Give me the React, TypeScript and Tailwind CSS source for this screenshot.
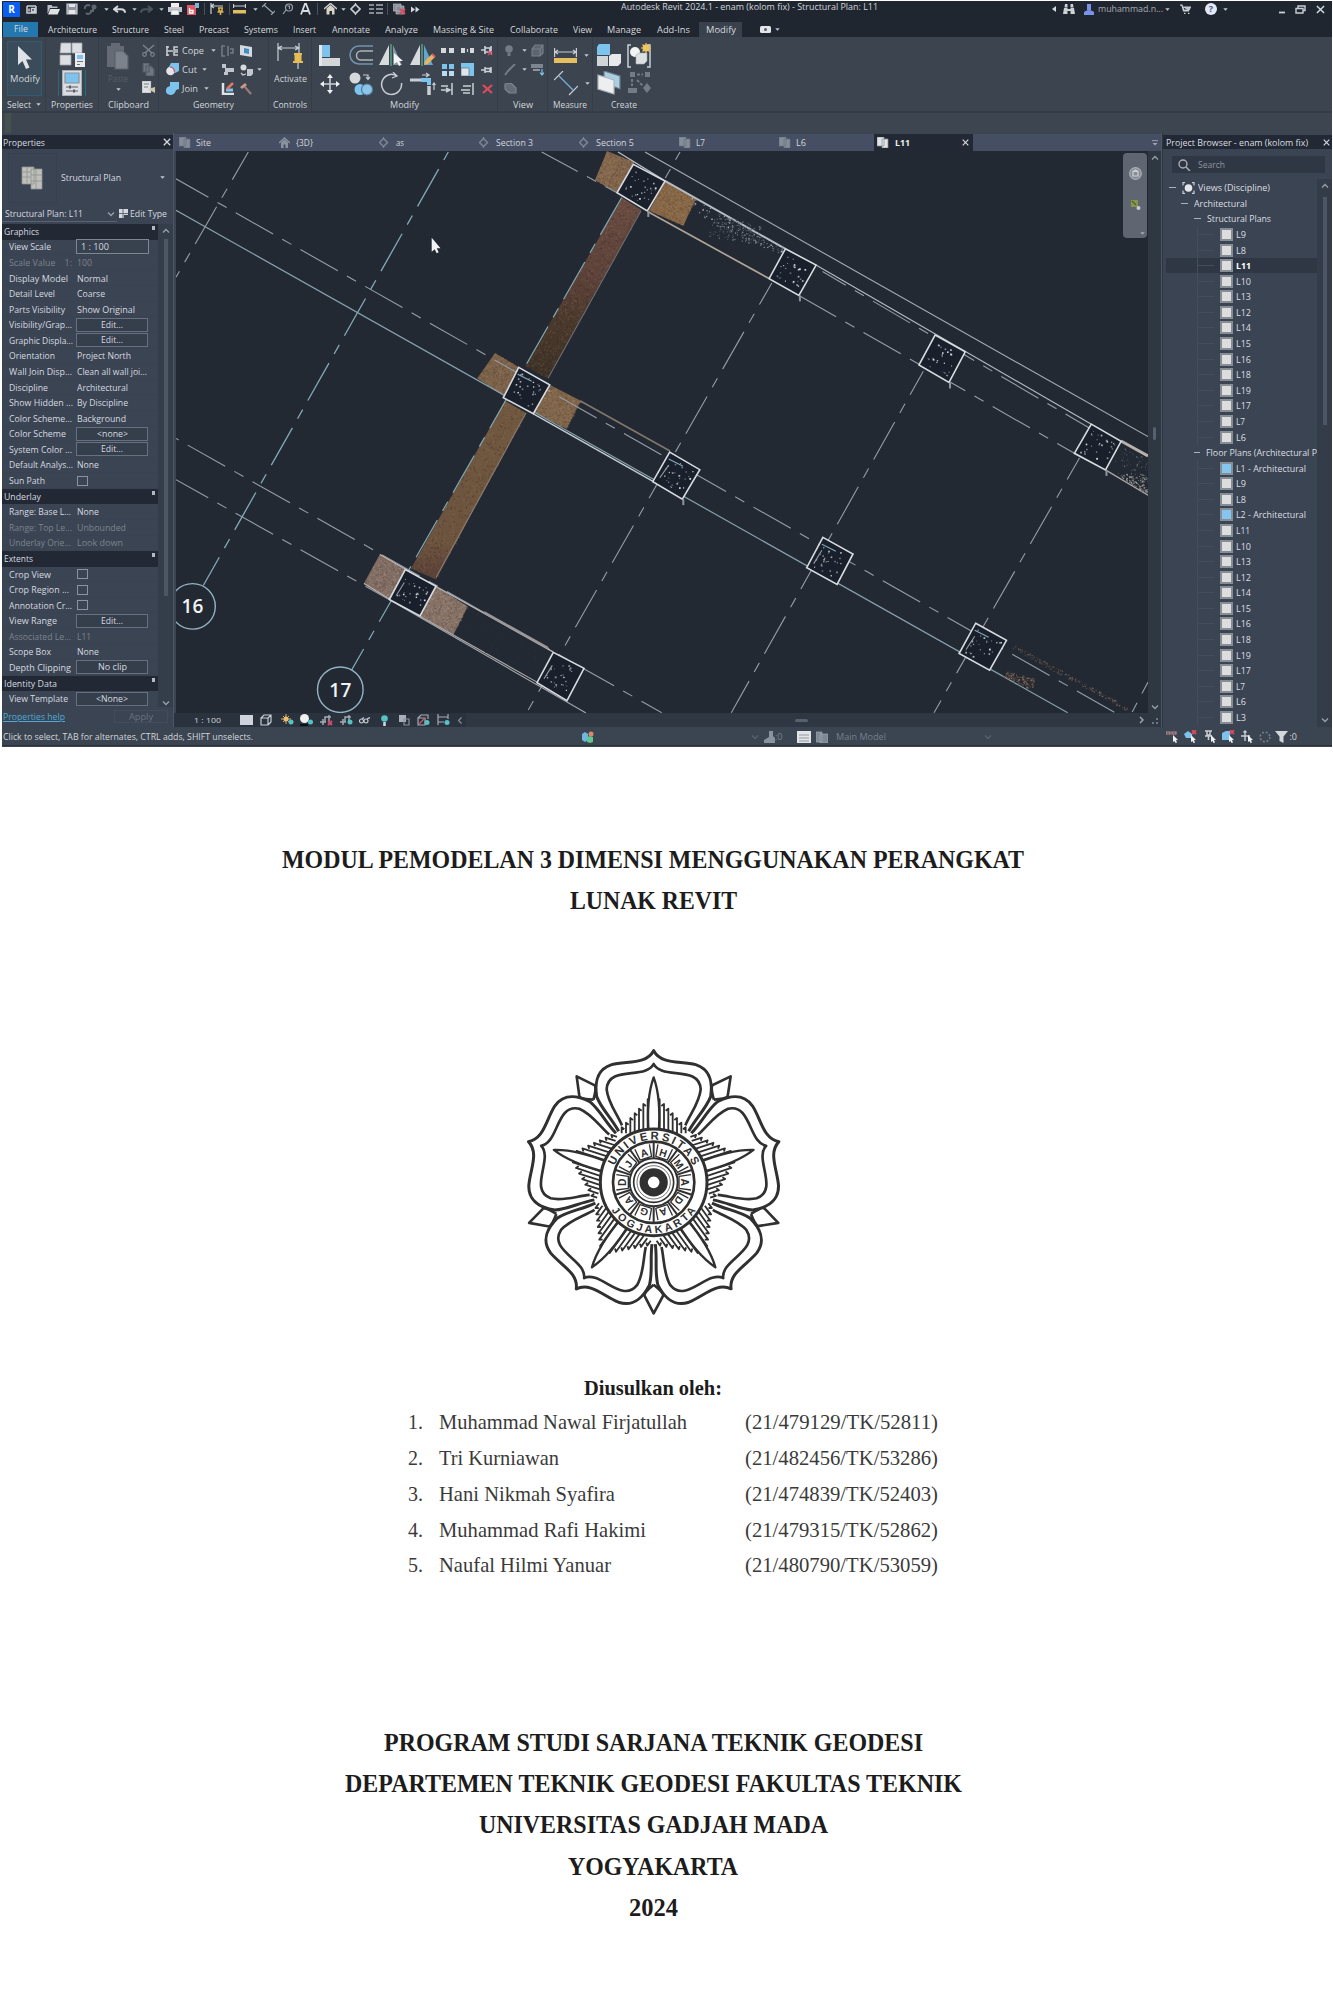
import React, { useLayoutEffect, useRef } from 'react';

type Kids = { children?: React.ReactNode };

/* Single-line label condensed or widened to an exact advance width. */
function Fit({ t, w, c = '' }: { t: string; w: number; c?: string }) {
  const ref = useRef<HTMLSpanElement>(null);
  const box = useRef<HTMLSpanElement>(null);
  useLayoutEffect(() => {
    if (!ref.current || !box.current) return;
    ref.current.style.transform = 'none';
    const n = ref.current.getBoundingClientRect().width;
    ref.current.style.transform = `scaleX(${w / n})`;
    box.current.style.width = `${w}px`;
  }, [t, w]);
  return (
    <span ref={box} className={`inline-block shrink-0 whitespace-nowrap ${c}`}>
      <span ref={ref} className="inline-block origin-left whitespace-nowrap">{t}</span>
    </span>
  );
}

function S({ w, h, c = '', children }: { w: number; h: number; c?: string } & Kids) {
  return (
    <svg width={w} height={h} viewBox={`0 0 ${w} ${h}`} fill="none" stroke="#c9ced4" strokeWidth="1.2" className={`block shrink-0 ${c}`}>
      {children}
    </svg>
  );
}

const Caret = ({ c = '' }: { c?: string }) => (
  <S w={5} h={3} c={c}><path d="M.3.2h4.4L2.5 2.8z" fill="#c3c9d0" stroke="none" /></S>
);
const Close = ({ s = 8 }: { s?: number }) => (
  <svg width={s} height={s} viewBox="0 0 8 8" stroke="#d5dae0" strokeWidth="1.3" className="block shrink-0"><path d="M.8.8l6.4 6.4M7.2.8L.8 7.2" /></svg>
);
const Chev = ({ d = 'down', c = '' }: { d?: string; c?: string }) => (
  <S w={8} h={6} c={c}><path d={d === 'down' ? 'M1 1.5l3 3 3-3' : 'M1 4.5l3-3 3 3'} stroke="#98a0ab" strokeWidth="1.3" /></S>
);
const Bar = () => <span className="h-3 w-px bg-[#4a525d]" />;

/* ---------- title bar ---------- */
function TitleBar() {
  return (
    <div className="flex h-[21px] items-start bg-[#20262f] text-[9px] text-[#d0d5da]">
      <div className="flex h-4 items-center">
        <div className="ml-px flex h-[15px] w-[17px] items-center justify-center bg-[#0b5ff0] text-[10px] font-bold text-white">R</div>
        <div className="ml-[6px] w-[21px]"><S w={11} h={10}><path d="M1 2h9M1 2v7h9V2M3 4.5v3M5.5 4.5h3v3h-3z" strokeWidth="1.5" /></S></div>
        <div className="w-[19px]"><S w={13} h={11}><path d="M.5 10V1h4l1 1.5h5V4H3z" fill="#b9bec4" stroke="none" /><path d="M3.2 5H13l-2.4 5.5H1z" fill="#dfe2e5" stroke="none" /></S></div>
        <div className="w-[18px]"><S w={12} h={12}><path d="M1 1h10v10H1z" fill="#8f959d" stroke="#c9ced4" /><path d="M3 1h6v3H3zM2.5 7h7v4h-7z" fill="#e5e7ea" stroke="none" /></S></div>
        <div className="w-[20px]"><S w={13} h={12}><path d="M1 6a3 3 0 015-3M7 7a3 3 0 01-5 3M6 8h3V5" stroke="#5d6570" strokeWidth="2" /><circle cx="10" cy="4" r="2.5" fill="#5d6570" stroke="none" /></S></div>
        <div className="w-[9px]"><Caret /></div>
        <div className="w-[19px]"><S w={13} h={9}><path d="M5 1L1 4.200l4 3M1.500 4.200h6.500q4 0 4 3.500" strokeWidth="2" stroke="#d5d9de" /></S></div>
        <div className="w-[8px]"><Caret /></div>
        <div className="w-[19px]"><S w={13} h={9}><path d="M8 1l4 3.200-4 3M11.500 4.200H5q-4 0-4 3.500" strokeWidth="2" stroke="#4b535e" /></S></div>
        <div className="w-[9px]"><Caret /></div>
        <div className="w-[19px]"><S w={14} h={12}><path d="M3 0h8v4H3z" fill="#eee" stroke="none" /><path d="M0 4h14v5H0z" fill="#c4c8cd" stroke="none" /><path d="M3 7h8v5H3z" fill="#f3f3f3" stroke="#8d939b" strokeWidth=".6" /></S></div>
        <div className="w-[17px]"><S w={12} h={12}><path d="M0 2h9v10H0z" fill="#e2596a" stroke="none" /><path d="M2.500 5v5h3.500V7.500H2.500" stroke="#fff" strokeWidth="1.300" /><path d="M8 0h4v5H8z" fill="#77b7d8" stroke="none" /></S></div>
        <Bar />
        <div className="ml-[5px] w-[19px]"><S w={14} h={12}><path d="M1 0v11M1 3h12M4 1L1 3l3 2" /><path d="M8 5h5M9 5v3h3V5M7.500 9h6M10.500 9v3" stroke="#d8b253" strokeWidth="1.500" /></S></div>
        <Bar />
        <div className="ml-[3px] w-[20px]"><S w={13} h={10}><path d="M.5 2h12M.5 0v4M12.500 0v4" /><path d="M0 6h13v3.500H0z" fill="#e0bf63" stroke="none" /></S></div>
        <div className="w-[9px]"><Caret /></div>
        <div className="w-[20px]"><S w={13} h={12}><path d="M2 2l9 8M0 4l4-4M9 12l4-4" stroke="#9aa1aa" /></S></div>
        <div className="w-[18px]"><S w={12} h={12}><circle cx="7" cy="4.500" r="3.500" stroke="#9aa1aa" /><path d="M5.500 3h2v3M1 11l3-4" stroke="#9aa1aa" /></S></div>
        <div className="w-[17px]"><S w={11} h={12}><path d="M1 11.500L5 .8h1L10 11.500M2.500 8h6" strokeWidth="1.800" stroke="#d9dde1" /></S></div>
        <Bar />
        <div className="ml-[6px] w-[17px]"><S w={13} h={12}><path d="M0 6l6.500-5.500L13 6" strokeWidth="1.600" /><path d="M2.500 5.500v6h3V8h2.500v3.500h2.500v-6L6.500 2z" fill="#d9d4c8" stroke="none" /></S></div>
        <div className="w-[9px]"><Caret /></div>
        <div className="w-[19px]"><S w={11} h={12}><path d="M5.500 1.500L10 6l-4.500 4.500L1 6z" strokeWidth="1.600" /><path d="M5.500 0v2M5.500 10v2" /></S></div>
        <div className="w-[18px]"><S w={14} h={12}><path d="M0 2h5M7 2h7M0 6h5M7 6h7M0 10h5M7 10h7" stroke="#a9afb7" strokeWidth="1.500" /></S></div>
        <Bar />
        <div className="ml-[5px] w-[18px]"><S w={13} h={12}><path d="M0 1h8v7H0zM3 3h8v8H3z" fill="#858c95" stroke="#b4bac1" strokeWidth=".7" /><path d="M7 6l5 5M12 6l-5 5" stroke="#d64c63" strokeWidth="2" /></S></div>
        <S w={9} h={7}><path d="M0 .5L4 3.500 0 6.500zM4.500 .5l4 3-4 3z" fill="#d5d9de" stroke="none" /></S>
      </div>
      <div className="flex h-[12px] w-[632px] shrink-0 items-center pl-[201px]"><Fit t="Autodesk Revit 2024.1 - enam (kolom fix) - Structural Plan: L11" w={257} c="leading-3" /></div>
      <div className="flex h-4 items-center">
        <S w={4} h={6} c="mr-[7px]"><path d="M4 0v6L0 3z" fill="#d5d9de" stroke="none" /></S>
        <div className="w-[21px]"><S w={12} h={10}><path d="M1 4h3.500v6H0zM7.500 4H11l1 6H7.500zM2 0h2.500v3.500H1.500zM7.500 0H10l.5 3.500h-3zM4.500 5h3v2h-3z" fill="#ccd1d6" stroke="none" /></S></div>
        <div className="w-[14px]"><S w={10} h={11}><path d="M3 0h4v6H3zM0 8q5-4 10 0v3H0z" fill="#7a93e8" stroke="none" /></S></div>
        <Fit t="muhammad.n..." w={65} c="text-[#a6acb4]" />
        <Caret c="ml-[2px]" />
        <S w={11} h={10} c="ml-[10px]"><path d="M0 1h2l1.500 6H9M3 3h7.500L9 6H3.500z" fill="#bfc4ca" /><path d="M4 9.300h1.500M8 9.300h1.500" /></S>
        <div className="ml-[8px]"><Bar /></div>
        <div className="ml-[6px] flex h-[12px] w-[12px] items-center justify-center rounded-full bg-[#e3e8f5] text-[9px] font-bold text-[#3e5487]">?</div>
        <Caret c="ml-[6px]" />
        <S w={6} h={9} c="ml-[51px]"><path d="M0 7.500h6" strokeWidth="1.800" /></S>
        <S w={11} h={9} c="ml-[10px]"><path d="M3 3V1h7v4.500H8M1 3.500h7V8H1z" strokeWidth="1.400" /></S>
        <div className="ml-[10px]"><Close s={9} /></div>
      </div>
    </div>
  );
}

/* ---------- ribbon tabs ---------- */
const TABS: [string, string, number][] = [
  ['w-[64px]', 'Architecture', 49], ['w-[52px]', 'Structure', 37], ['w-[35px]', 'Steel', 20], ['w-[45px]', 'Precast', 30],
  ['w-[49px]', 'Systems', 34], ['w-[39px]', 'Insert', 23], ['w-[53px]', 'Annotate', 38], ['w-[48px]', 'Analyze', 33],
  ['w-[77px]', 'Massing & Site', 61], ['w-[63px]', 'Collaborate', 48], ['w-[34px]', 'View', 19], ['w-[50px]', 'Manage', 34], ['w-[42px]', 'Add-Ins', 33],
];
function RibbonTabs() {
  return (
    <div className="flex h-[15px] items-center bg-[#20262f] text-[9.5px] text-[#d6dade]">
      <div className="ml-px mr-[10px] flex h-[15px] w-[35px] items-center justify-center bg-[#2478b0]"><Fit t="File" w={14} /></div>
      {TABS.map(([cl, t, w]) => <div key={t} className={`shrink-0 leading-[15px] ${cl}`}><Fit t={t} w={w} /></div>)}
      <div className="flex h-[15px] w-[43px] items-center justify-center bg-[#38414c] leading-[15px]"><Fit t="Modify" w={30} /></div>
      <S w={11} h={7} c="ml-[18px]"><rect width="11" height="7" rx="1.500" fill="#e3e6e9" stroke="none" /><circle cx="5.500" cy="3.500" r="1.500" fill="#555d68" stroke="none" /></S>
      <Caret c="ml-[4px]" />
    </div>
  );
}

/* ---------- ribbon ---------- */
function Panel({ c, t, w, caret, children }: { c: string; t: string; w: number; caret?: boolean } & Kids) {
  return (
    <div className={`flex shrink-0 flex-col border-r border-[#343d48] pt-1 ${c}`}>
      <div className="flex h-[58px]">{children}</div>
      <div className="flex h-[14px] items-center justify-center gap-[5px]"><Fit t={t} w={w} />{caret && <Caret />}</div>
    </div>
  );
}
const Cell = ({ c = '', children }: { c?: string } & Kids) => <div className={`flex items-center justify-center ${c}`}>{children}</div>;
const BL = '#7cc4ee';

function Ribbon() {
  return (
    <div className="flex h-[76px] border-b-2 border-[#343c4a] bg-[#3b444f] text-[9.5px] leading-[13px] text-[#d3d7dc]">
      <Panel c="w-[44px]" t="Select" w={24} caret>
        <div className="ml-[5px] flex h-[55px] w-[35px] flex-col items-center border border-[#2f5b73] bg-[#3a4b59]">
          <S w={16} h={25} c="mt-[3px]"><path d="M1 1v19l4.500-4 3.500 8 3.500-1.500-3.500-8h6z" fill="#dfe2e6" stroke="none" /></S>
          <Fit t="Modify" w={30} c="mt-[2px]" />
        </div>
      </Panel>
      <Panel c="w-[53px]" t="Properties" w={42}>
        <div className="flex w-full flex-col items-center">
          <S w={27} h={26} c="mt-px"><path d="M2 1h10v10H1zM13 1h10v10H13zM1 13h11v10H1z" fill="#dcdee1" stroke="#9ca2aa" strokeWidth=".8" /><path d="M16 11h10v14H16z" fill="#e8eaec" stroke="none" /><path d="M18 13h6v4h-6z" fill={BL} stroke="none" /><path d="M18 19.500h6M18 22.500h3" stroke="#6d747d" /></S>
          <div className="mt-[2px] flex w-[28px] justify-center border-x border-[#2b6a83]"><S w={20} h={26}><path d="M.5.5h19v25H.500z" fill="#dadde1" stroke="#a7adb4" /><path d="M3 3h14v10H3z" fill={BL} stroke="#8a9099" /><path d="M4 17h12M4 21h12" stroke="#575e68" /><path d="M8 15.500v3M12 19.500v3" stroke="#575e68" strokeWidth="2" /></S></div>
        </div>
      </Panel>
      <Panel c="w-[60px]" t="Clipboard" w={41}>
        <div className="mr-[5px] flex w-[38px] flex-col items-center text-[#565f6a]">
          <S w={22} h={27} c="mt-[2px]"><path d="M0 3h17v21H0zM4 0h9v5H4z" fill="#646b75" stroke="none" /><path d="M8 8h8l5 5v13H8z" fill="#7b828b" stroke="#5b626c" /></S>
          <Fit t="Paste" w={20} c="mt-[2px]" /><Caret c="mt-[3px]" />
        </div>
        <div className="flex flex-col justify-around">
          <S w={13} h={13}><path d="M1 1l9 8M12 1L3 9" stroke="#7b838d" strokeWidth="1.500" /><circle cx="2.500" cy="10.500" r="1.800" stroke="#7b838d" /><circle cx="10.500" cy="10.500" r="1.800" stroke="#7b838d" /></S>
          <S w={13} h={13}><path d="M1 0h6v9H1zM4 3h5l3 3v7H4z" fill="#6f7680" stroke="#535b66" /></S>
          <S w={14} h={13}><path d="M.5.500h8v11h-8z" fill="#dfe2e5" /><path d="M2 3h5M2 6h4" stroke="#757c86" /><path d="M6 8l7 4V6z" fill="#cfc9a8" stroke="none" /></S>
        </div>
      </Panel>
      <Panel c="w-[110px]" t="Geometry" w={41}>
        <div className="ml-[7px] flex w-[55px] flex-col">
          <div className="flex h-[19px] items-center"><S w={13} h={10}><path d="M1 0v10M0 1h3M0 9h3M1 5h6M12 1H8v3h4M12 9H8V6h4" strokeWidth="1.500" /></S><Fit t="Cope" w={22} c="ml-[3px]" /><Caret c="ml-[7px]" /></div>
          <div className="flex h-[19px] items-center"><S w={13} h={13}><circle cx="4.500" cy="8" r="4.300" fill="#e3e5e8" stroke="none" /><path d="M5 0h8v8l-4 2q0-5-6-6z" fill={BL} stroke="none" /><path d="M4 4q4 0 4.500 5" stroke="#d94c5f" /></S><Fit t="Cut" w={15} c="ml-[3px]" /><Caret c="ml-[5px]" /></div>
          <div className="flex h-[19px] items-center"><S w={13} h={13}><path d="M4 0h9v7l-3 1q-1 5-6 5-5-1-4-5 0-3 4-4z" fill={BL} stroke="none" /></S><Fit t="Join" w={16} c="ml-[3px]" /><Caret c="ml-[6px]" /></div>
        </div>
        <div className="flex w-[19px] flex-col justify-around">
          <S w={13} h={12}><path d="M4 1H1v10h3M7 1v10M9 4h3v4H9" stroke="#727a85" strokeWidth="1.600" /></S>
          <S w={14} h={11}><path d="M1 0h4v4H1zM4 4h9v4H4zM3 8h4v3H3z" fill="#bfc4ca" stroke="none" /></S>
          <S w={14} h={13}><path d="M2 1v11h11" stroke="#e0e3e6" strokeWidth="2.500" /><path d="M5 8h7" stroke={BL} strokeWidth="3" /><path d="M6 7l6-6" stroke="#e07862" strokeWidth="2.500" /></S>
        </div>
        <div className="flex flex-col justify-around">
          <S w={13} h={12}><path d="M0 0l12 2v10L0 10z" fill="#d6dade" stroke="none" /><path d="M4 3l5 1v5L4 8z" fill="#3f8fc4" stroke="none" /></S>
          <div className="flex w-[22px] items-center justify-between"><S w={13} h={12}><circle cx="3.500" cy="3.500" r="3" fill="#d6dade" stroke="none" /><path d="M7 5h6v5l-2 2H7z" fill="#c2c7cd" stroke="none" /><path d="M1 9l2 2 3-1" /></S><Caret /></div>
          <S w={12} h={12}><path d="M4 3l7 8" stroke="#9b7a72" strokeWidth="2.200" /><path d="M0 4l5-4 2 2-5 4z" fill="#c39a8d" stroke="none" /></S>
        </div>
      </Panel>
      <Panel c="w-[43px]" t="Controls" w={34}>
        <div className="flex w-full flex-col items-center">
          <S w={26} h={27} c="mt-[2px]"><path d="M1 0v18M22 0v10M1 5h21M5 3L1 5l4 2M18 3l4 2-4 2" /><path d="M17 11h8M18.500 11v7h5v-7M16 19h10" stroke="#e8bc55" fill="#e8bc55" strokeWidth="2" /><path d="M21 20v6" /></S>
          <Fit t="Activate" w={33} c="mt-[2px]" />
        </div>
      </Panel>
      <Panel c="w-[186px]" t="Modify" w={29}>
        <div className="ml-[2px] grid w-[124px] shrink-0 grid-cols-4 grid-rows-2">
          <Cell><S w={21} h={21}><path d="M0 0h3v21H0z" fill="#e5e7e9" stroke="none" /><path d="M3 0h8v12H3z" fill={BL} stroke="none" /><path d="M3 13h18v8H3z" fill="#d4d7da" stroke="none" /></S></Cell>
          <Cell><S w={25} h={21}><path d="M25 1H11a9 9 0 000 18h14" stroke="#7394ac" strokeWidth="1.500" /><path d="M25 6H13a4 4 0 000 9h12" stroke="#aeb4bc" strokeWidth="1.500" /></S></Cell>
          <Cell><S w={25} h={23}><path d="M10 1v20H0z" fill="#d8dbde" stroke="none" /><path d="M14 1v20h9z" fill="#8298a5" stroke="none" /><path d="M12 0v22" stroke="#62b78d" /><path d="M15 9v11l3-2 2 4 2-1-2-4h4z" fill="#f4f4f4" stroke="none" /></S></Cell>
          <Cell><S w={26} h={23}><path d="M10 1v20H0z" fill="#d8dbde" stroke="none" /><path d="M14 1v20h9z" fill="#66a5cf" stroke="none" /><path d="M12 0v22" stroke="#62b78d" /><path d="M14 21l1-4 7-7 3 3-7 7z" fill="#e6b55f" stroke="none" /><path d="M22 10l3 3" stroke="#d9606b" strokeWidth="2" /></S></Cell>
          <Cell><S w={20} h={20}><path d="M10 2v16M2 10h16" strokeWidth="1.600" /><path d="M10 0l3 4H7zM10 20l3-4H7zM0 10l4-3v6zM20 10l-4-3v6z" fill="#f0f1f2" stroke="none" /></S></Cell>
          <Cell><S w={24} h={24}><circle cx="6" cy="6" r="5.500" fill="#d6d9dc" stroke="none" /><path d="M14 3h5v4M17 5l2 2.500 2-2.500" /><circle cx="11" cy="17.500" r="5.500" fill={BL} stroke="none" /><circle cx="18" cy="17.500" r="5.500" fill="#8cc5e8" stroke="#4c7d9c" /></S></Cell>
          <Cell><S w={24} h={24}><path d="M17 4A10 10 0 1021.500 11" strokeWidth="1.500" /><path d="M13 0l4 4-5 2" /></S></Cell>
          <Cell><S w={26} h={23}><path d="M12 3h6M16 1l3 2-3 2" /><path d="M0 8h11" strokeWidth="3" /><path d="M11 8h8v5" stroke={BL} strokeWidth="4" /><path d="M19 14v9" strokeWidth="3.500" /><path d="M24 18v-7M22.500 13l1.500-2 1.500 2" /></S></Cell>
        </div>
        <div className="grid h-[57px] w-[59px] shrink-0 grid-cols-3 grid-rows-3">
          <Cell><S w={13} h={6}><path d="M0 0h5v5H0zM8 0h5v5H8z" fill="#d6d9dc" stroke="none" /></S></Cell>
          <Cell><S w={13} h={6}><path d="M0 0h4v5H0zM9 0h4v5H9z" fill="#d6d9dc" stroke="none" /><path d="M6.500 1v3" /></S></Cell>
          <Cell><S w={13} h={10}><path d="M0 4h4M4 0v8M4 2h5v4H4M10 0v8" strokeWidth="1.700" /><path d="M7 5l4 4M11 5L7 9" stroke="#d64c63" strokeWidth="1.500" /></S></Cell>
          <Cell><S w={12} h={12}><path d="M0 0h5v5H0zM7 0h5v5H7z" fill={BL} stroke="none" /><path d="M0 7h5v5H0zM7 7h5v5H7z" fill="#b9dcf0" stroke="none" /></S></Cell>
          <Cell><S w={13} h={13}><path d="M0 0h13v13H0z" fill={BL} stroke="none" /><path d="M0 5h8v8H0z" fill="#e2e5e8" stroke="#5a7f96" strokeWidth=".8" /></S></Cell>
          <Cell><S w={12} h={8}><path d="M0 4h4M4 1v6M4 2.500h5v3H4M10 1v6" strokeWidth="1.600" /></S></Cell>
          <Cell><S w={13} h={12}><path d="M0 3h7M0 7h9M11 0v12M5 5l4 2-4 2" strokeWidth="1.500" /></S></Cell>
          <Cell><S w={13} h={12}><path d="M2 3h8M0 7h9M2 10h7M12 0v12" strokeWidth="1.500" /></S></Cell>
          <Cell><S w={11} h={10}><path d="M1 1l9 8M10 1L1 9" stroke="#dd4b5e" strokeWidth="2.200" /></S></Cell>
        </div>
      </Panel>
      <Panel c="w-[50px]" t="View" w={20}>
        <div className="ml-[6px] flex w-[27px] flex-col justify-around">
          <div className="flex items-center gap-[8px]"><S w={10} h={12}><circle cx="5" cy="4" r="3.800" fill="#737b85" stroke="none" /><path d="M3.500 8h3v3h-3z" fill="#737b85" stroke="none" /></S><Caret /></div>
          <div className="flex items-center gap-[6px]"><S w={12} h={12}><path d="M1 11l3-4L11 0" stroke="#737b85" strokeWidth="2" /></S><Caret /></div>
          <S w={13} h={11}><path d="M1 1l6-1 5 5v5H5L1 6z" fill="#646c77" stroke="#7d858f" /></S>
        </div>
        <div className="flex flex-col">
          <Cell c="h-[19px]"><S w={13} h={13}><path d="M1 5l3-4h8v8l-3 3H1zM1 5h8v7M9 5l3-4" fill="#5c646f" stroke="#767e88" /></S></Cell>
          <Cell c="h-[19px]"><S w={13} h={13}><path d="M0 1h12v4H0z" fill="#7d858f" stroke="none" /><path d="M2 7h7" /><path d="M11 6v6M9 9.500l2 2.500 2-2.500" stroke={BL} /></S></Cell>
        </div>
      </Panel>
      <Panel c="w-[45px]" t="Measure" w={34}>
        <div className="ml-[6px] flex flex-col">
          <div className="flex h-[28px] items-center gap-[7px]"><S w={23} h={15}><path d="M.600 0v9M22.400 0v9M1 4h21M4 2L1 4l3 2M19 2l3 2-3 2" /><path d="M0 10h23v5H0z" fill="#e8bf60" stroke="none" /></S><Caret /></div>
          <div className="flex h-[28px] items-center gap-[7px]"><S w={24} h={25}><path d="M5 5l14 14" stroke="#71b3dc" /><path d="M0 9l9-9M15 24l9-9" /></S><Caret /></div>
        </div>
      </Panel>
      <Panel c="w-[63px] border-transparent" t="Create" w={26}>
        <div className="ml-px grid w-[60px] grid-cols-2 grid-rows-2">
          <Cell><S w={24} h={24}><path d="M2 1h11v11H0V4z" fill={BL} stroke="none" /><path d="M0 13h11v10H0z" fill="#d2d5d8" stroke="none" /><path d="M12 13l3-2h9v9l-3 3h-9z" fill="#e6e8ea" stroke="none" /></S></Cell>
          <Cell><S w={25} h={25}><path d="M4 2H1v22h3M20 2h3v22h-3" strokeWidth="1.500" /><circle cx="8" cy="9" r="5" fill="#f2f3f4" stroke="none" /><path d="M9 12l3-2h8v8l-3 3H9z" fill="#dde0e3" stroke="#a7adb4" strokeWidth=".6" /><circle cx="19" cy="5" r="3.500" fill="#f0c55e" stroke="none" /><path d="M19 0v10M14 5h10M15.500 1.500l7 7M22.500 1.500l-7 7" stroke="#f0c55e" /></S></Cell>
          <Cell><S w={25} h={24}><path d="M7 0l16 5v13L7 12z" fill="#a9cfe4" stroke="#6f7881" /><path d="M1 4l16 5v14L1 18z" fill="#eceef0" stroke="#b0b5bb" /></S></Cell>
          <Cell><S w={25} h={24}><path d="M3 1h5v5H3zM18 1h5v5h-5zM1 17h9v5H1z" fill="#747b85" stroke="none" /><path d="M10 3.500h6M5 8v7M10 9l6 6" stroke="#747b85" strokeWidth="2" strokeDasharray="3 1.500" /><path d="M20 12l4 5-4 5-4-5z" fill="#747b85" stroke="none" /></S></Cell>
        </div>
      </Panel>
    </div>
  );
}

/* ---------- properties palette ---------- */
type Kind = 'head' | 'field' | 'dim' | 'text' | 'btn' | 'check';
const PROPS: [Kind, string, number, string, number][] = [
  ['head', 'Graphics', 35, '', 0],
  ['field', 'View Scale', 42, '1 : 100', 28],
  ['dim', 'Scale Value\u00a0\u00a0\u00a0\u00a01:', 63, '100', 15],
  ['text', 'Display Model', 59, 'Normal', 31],
  ['text', 'Detail Level', 46, 'Coarse', 28],
  ['text', 'Parts Visibility', 56, 'Show Original', 58],
  ['btn', 'Visibility/Grap...', 63, 'Edit...', 22],
  ['btn', 'Graphic Displa...', 64, 'Edit...', 22],
  ['text', 'Orientation', 46, 'Project North', 54],
  ['text', 'Wall Join Disp...', 63, 'Clean all wall joi...', 70],
  ['text', 'Discipline', 39, 'Architectural', 51],
  ['text', 'Show Hidden ...', 64, 'By Discipline', 51],
  ['text', 'Color Scheme...', 63, 'Background', 49],
  ['btn', 'Color Scheme', 57, '<none>', 31],
  ['btn', 'System Color ...', 63, 'Edit...', 22],
  ['text', 'Default Analys...', 64, 'None', 22],
  ['check', 'Sun Path', 36, '', 0],
  ['head', 'Underlay', 37, '', 0],
  ['text', 'Range: Base L...', 62, 'None', 22],
  ['dim', 'Range: Top Le...', 63, 'Unbounded', 49],
  ['dim', 'Underlay Orie...', 62, 'Look down', 46],
  ['head', 'Extents', 29, '', 0],
  ['check', 'Crop View', 42, '', 0],
  ['check', 'Crop Region ...', 60, '', 0],
  ['check', 'Annotation Cr...', 63, '', 0],
  ['btn', 'View Range', 48, 'Edit...', 22],
  ['dim', 'Associated Le...', 62, 'L11', 14],
  ['text', 'Scope Box', 42, 'None', 22],
  ['btn', 'Depth Clipping', 62, 'No clip', 29],
  ['head', 'Identity Data', 53, '', 0],
  ['btn', 'View Template', 59, '<None>', 32],
];
function PropRow({ r }: { r: (typeof PROPS)[number] }) {
  const [k, a, aw, b, bw] = r;
  if (k === 'head')
    return (
      <div className="flex h-[15.580px] items-center justify-between bg-[#222934] pl-[2px] pr-[3px]">
        <Fit t={a} w={aw} /><span className="mb-[7px] h-[4px] w-[3px] bg-[#b4bac2]" />
      </div>
    );
  return (
    <div className={`flex h-[15.580px] items-center border-b border-[#394251] pl-[7px] ${k === 'dim' ? 'text-[#7b838e]' : ''}`}>
      <div className="w-[67px] shrink-0"><Fit t={a} w={aw} /></div>
      {k === 'btn' && <div className="flex h-[14px] w-[72px] items-center justify-center border border-[#667080] bg-[#353e4b] leading-3"><Fit t={b} w={bw} /></div>}
      {k === 'field' && <div className="flex h-[15px] w-[73px] items-center border border-[#7d8693] bg-[#38414e] pl-1 leading-3"><Fit t={b} w={bw} /></div>}
      {k === 'check' && <div className="ml-px h-[10px] w-[11px] border border-[#8a93a0]" />}
      {(k === 'text' || k === 'dim') && <div className="ml-px"><Fit t={b} w={bw} /></div>}
    </div>
  );
}
function Properties() {
  return (
    <div className="flex w-[172px] shrink-0 flex-col border-r border-[#4c5665] bg-[#3b4452] text-[9.500px] leading-[13px] text-[#d6dae0]">
      <div className="mt-[2px] flex h-[14px] items-center justify-between bg-[#222934] pl-px pr-[2px] text-[9px]"><Fit t="Properties" w={42} /><Close s={8} /></div>
      <div className="flex h-[57px] items-center">
        <div className="ml-[6px] flex h-[50px] w-[49px] items-center justify-center border border-[#364050]">
          <S w={24} h={24}><path d="M1 1h12v17H1zM10 3h11v20H10z" fill="#bfc0bb" stroke="#8f9290" strokeWidth=".8" /><path d="M1 6h9M1 11h9M6 1v16M10 9h11M10 15h11M15 3v20" stroke="#8f9290" strokeWidth=".8" /></S>
        </div>
        <Fit t="Structural Plan" w={60} c="ml-[4px]" />
        <Caret c="ml-[39px]" />
      </div>
      <div className="flex h-[18px] items-start">
        <div className="flex h-[16px] w-[115px] items-center justify-between border-b border-[#596373] pl-[3px] pr-[2px]"><Fit t="Structural Plan: L11" w={78} /><Chev /></div>
        <div className="flex h-[15px] items-center"><S w={9} h={9} c="ml-[2px]"><path d="M0 0h9v6H5v3H0z" fill="#d5d8dc" stroke="none" /><path d="M0 4.500h9M4 0v9" stroke="#4a5360" strokeWidth=".8" /></S><Fit t="Edit Type" w={37} c="ml-[2px]" /></div>
      </div>
      <div className="flex">
        <div className="w-[156px] shrink-0">{PROPS.map((r, i) => <PropRow key={i} r={r} />)}</div>
        <div className="flex w-[15px] flex-col items-center bg-[#343d4a] pt-[4px]">
          <Chev d="up" /><div className="mt-[5px] h-[357px] w-[4px] bg-[#4d5665]" /><Chev c="mt-auto mb-px" />
        </div>
      </div>
      <div className="flex flex-1 items-center justify-between pl-px pr-[5px]">
        <Fit t="Properties help" w={62} c="text-[#4fa9d4] [&>span]:underline" />
        <div className="flex h-[13px] w-[54px] items-center justify-center border border-[#434d5a] leading-3 text-[#69727e]"><Fit t="Apply" w={24} /></div>
      </div>
    </div>
  );
}

/* ---------- plan drawing ---------- */
type P = [number, number];
function rng(seed: number) {
  let s = seed;
  return () => ((s = (s * 16807) % 2147483647) / 2147483647);
}
const pts = (p: P[]) => p.map((q) => q.join(',')).join(' ');
/* bilinear point inside a quad */
const at = (q: P[], u: number, v: number): P => [
  (1 - v) * ((1 - u) * q[0][0] + u * q[1][0]) + v * ((1 - u) * q[3][0] + u * q[2][0]),
  (1 - v) * ((1 - u) * q[0][1] + u * q[1][1]) + v * ((1 - u) * q[3][1] + u * q[2][1]),
];
function Specks({ q, n, seed, colors, r = 1, o = 1 }: { q: P[]; n: number; seed: number; colors: string[]; r?: number; o?: number }) {
  const f = rng(seed);
  return (
    <g opacity={o}>
      {Array.from({ length: n }, (_, i) => {
        const [x, y] = at(q, f(), f());
        const s = r * (0.6 + f() * 0.8);
        return <rect key={i} x={x.toFixed(1)} y={y.toFixed(1)} width={s.toFixed(1)} height={s.toFixed(1)} fill={colors[Math.floor(f() * colors.length)]} />;
      })}
    </g>
  );
}
const COLS: P[][] = [
  [[633.3, 163.4], [665, 180.2], [647.3, 210.2], [617, 191.9]],
  [[785.4, 248.1], [816.1, 264.5], [798.9, 294.9], [769.1, 278.1]],
  [[935.1, 334.7], [965.2, 351.5], [949, 382.3], [918.9, 364.8]],
  [[1091.3, 424.1], [1121.1, 441.3], [1105.5, 470.1], [1074.4, 453.4]],
  [[518.7, 367.1], [549.7, 384.7], [533.3, 413.6], [503.3, 397.6]],
  [[669.7, 452.2], [699.8, 469.8], [682.3, 499.4], [652.8, 481.9]],
  [[822.9, 537.7], [853, 554.4], [837.1, 584.9], [806.7, 568.1]],
  [[975.7, 623.9], [1006.5, 641.1], [989.6, 671.1], [959.1, 654.3]],
  [[405.3, 570], [436, 586.8], [420, 616.5], [389.3, 600.1]],
  [[553.3, 653.2], [584, 669.2], [567, 701.6], [537, 683.6]],
];
const BROWN: { q: P[]; f: string; c: string[] }[] = [
  { q: [[607, 150], [634, 161], [617, 192], [595, 179]], f: '#80644b', c: ['#a08160', '#5f4936', '#96785a'] },
  { q: [[665.4, 180], [695.8, 198], [683.3, 225], [649, 210]], f: '#856646', c: ['#a3815a', '#644b34', '#967450'] },
  { q: [[495, 352.7], [519, 367], [503.3, 395.6], [477.3, 378]], f: '#7a6149', c: ['#9c7d5f', '#5a4736', '#8d7156'] },
  { q: [[549.7, 384.7], [580.7, 400.7], [566.7, 428.8], [533.3, 412]], f: '#7e644a', c: ['#a1825f', '#5d4a37', '#8d7156'] },
  { q: [[380, 554.4], [405.3, 570], [389.3, 600], [364, 583.7]], f: '#7f6b61', c: ['#a89388', '#5d4d45', '#93796c'] },
  { q: [[436, 586.8], [467.7, 607], [453.3, 635.6], [420, 616.5]], f: '#847064', c: ['#ac988a', '#5e4e46', '#98806f'] },
];
const BEAMS: { q: P[]; g: string }[] = [
  { q: [[622, 197], [641, 209], [547, 378], [525, 366]], g: 'beamA' },
  { q: [[505, 400.7], [526, 413], [436, 580], [411, 569]], g: 'beamB' },
];
const CY = '#82aab6';
const GR = '#979da5';
const DASH = '43 10.500 10.500 10.500';
function L({ a, s = GR, w = 1.1, o }: { a: [number, number, number, number]; s?: string; w?: number; o?: number }) {
  return <line x1={a[0]} y1={a[1]} x2={a[2]} y2={a[3]} stroke={s} strokeWidth={w} strokeDasharray={o === undefined ? undefined : DASH} strokeDashoffset={o} />;
}
function Drawing() {
  return (
    <svg width="972" height="562" viewBox="176 150 972 564" preserveAspectRatio="none" className="block shrink-0 bg-[#222933]">
      <defs>
        <linearGradient id="beamA" x1="0" y1="0" x2="0" y2="1"><stop offset="0" stopColor="#694b41" /><stop offset=".45" stopColor="#5b4139" /><stop offset=".7" stopColor="#49382b" /><stop offset="1" stopColor="#3c3126" /></linearGradient>
        <linearGradient id="beamB" x1="0" y1="0" x2="0" y2="1"><stop offset="0" stopColor="#71583f" /><stop offset=".8" stopColor="#6b533e" /><stop offset="1" stopColor="#583e36" /></linearGradient>
      </defs>
      {BROWN.map((b, i) => (
        <g key={i}><polygon points={pts(b.q)} fill={b.f} /><Specks q={b.q} n={420} seed={77 + i * 31} colors={b.c} r={1.2} o={0.5} /></g>
      ))}
      {BEAMS.map((b, i) => (
        <g key={i}><polygon points={pts(b.q)} fill={`url(#${b.g})`} /><Specks q={b.q} n={900} seed={301 + i * 53} colors={['#a17c60', '#241d1a', '#84654c']} r={1.2} o={0.25} /></g>
      ))}
      <L a={[176, 177.9, 1115, 713.7]} o={5.7} />
      <L a={[176, 209.5, 1067.7, 713.7]} s="#88a2af" w={1.2} />
      <L a={[176, 438.5, 661.700, 713.7]} o={61} />
      <L a={[176, 479.9, 389, 600]} o={6} />
      <L a={[389, 600, 586, 714]} s="#a5a8ad" />
      <L a={[248.3, 151, 176, 276.6]} o={11} />
      <L a={[448.3, 151, 203.3, 586]} s={CY} o={54.8} w={1.3} />
      <L a={[621.7, 196.6, 351.7, 670.7]} s={CY} o={0} w={1.2} />
      <L a={[641, 210, 548, 378]} s="#75706e" />
      <L a={[526, 413, 436, 578]} s="#8a7d70" />
      <L a={[680, 151, 662, 183]} o={34} />
      <L a={[541.7, 151, 617, 191.9]} o={2} />
      <L a={[645, 151, 1148, 436.6]} s="#a7acb3" />
      <L a={[665, 180, 785, 248]} s="#b8bcc2" w={2} />
      <L a={[618, 151, 665, 180]} s="#b8bcc2" w={1.3} />
      <L a={[816, 264.5, 1091, 424]} s="#b8bcc2" />
      <L a={[1121, 441, 1148, 456]} s="#b8b2ad" w={3} />
      <L a={[822.5, 271, 1091, 429]} o={16} />
      <L a={[648, 211, 769, 278]} s="#b0a498" w={1.7} />
      <L a={[798.9, 295, 1074.400, 453.4]} o={0} />
      <L a={[1105.5, 470, 1148, 495.500]} s="#aaa6a3" w={1.4} />
      <L a={[771.8, 282.4, 526.7, 713.7]} o={18} />
      <L a={[923.3, 371, 731.3, 713.7]} o={16} />
      <L a={[1079.5, 458, 934, 713.7]} o={18} />
      <L a={[1148, 683, 1131.900, 713.7]} o={30} />
      <L a={[580, 400.700, 670, 451]} s="#83776c" w={1.6} />
      <L a={[436, 587, 553, 652.700]} s="#bcb9ba" w={1.3} />
      <L a={[484, 613, 548, 649]} s="#99979a" w={2.6} />
      <L a={[533, 413.5, 653, 481.500]} s="#c3ccd0" w={1.4} />
      <L a={[380, 555, 406, 570]} s="#c0b8b4" />
      <L a={[364, 584, 390, 600]} s="#c0b8b4" />
      <L a={[420, 617, 537, 683]} s="#b3b0b0" />
      <Specks q={[[690, 195], [790, 250], [775, 252], [700, 215]]} n={120} seed={11} colors={['#8d929a', '#6d727b', '#b5b9bf']} />
      <Specks q={[[716, 212], [762, 226], [756, 243], [708, 236]]} n={170} seed={19} colors={['#5c626c', '#474d58', '#70757e']} />
      <Specks q={[[1118, 446], [1148, 458], [1148, 474], [1114, 466]]} n={50} seed={21} colors={['#4c525c', '#3a404a', '#62666d']} />
      <Specks q={[[1116, 473], [1148, 474], [1148, 494], [1140, 490]]} n={130} seed={25} colors={['#a09a95', '#77797d']} />
      <Specks q={[[1008, 672], [1037, 680], [1031, 691], [1002, 677]]} n={170} seed={31} colors={['#6c5549', '#8a7063', '#4e423d']} />
      <Specks q={[[1016, 646], [1128, 708], [1126, 711], [1012, 649]]} n={170} seed={37} colors={['#6c5549', '#7d6658', '#4e423d']} />
      <Specks q={[[470, 610], [545, 652], [530, 680], [456, 636]]} n={80} seed={43} colors={['#2d2f34', '#322f30']} />
      {COLS.map((q, i) => (
        <g key={i}>
          <polygon points={pts(q)} fill="#19202b" stroke="#d8dbe0" strokeWidth="1.600" />
          <Specks q={[at(q, 0.12, 0.12), at(q, 0.88, 0.12), at(q, 0.88, 0.88), at(q, 0.12, 0.88)]} n={26} seed={101 + i * 17} colors={['#d2d6da', '#8a919b', '#a9b0b7', '#6d7681']} r={1.300} />
          {i > 3 && i < 8 && <L a={[q[0][0] - 1, q[0][1] + 7, q[0][0] + 13, q[0][1] + 14]} s={CY} />}
          {i > 4 && <L a={[q[0][0] - 1, q[0][1] + 13, q[3][0] + 7, q[3][1] - 4]} />}
          {(i < 4 || i === 5) && <L a={[q[2][0] + 1, q[2][1], q[2][0] + 1, q[2][1] + 6]} s="#8f959d" w={2} />}
        </g>
      ))}
      {([[192.5, 607, '16'], [340.3, 690.6, '17']] as [number, number, string][]).map(([x, y, t]) => (
        <g key={t}>
          <circle cx={x} cy={y} r="22.800" fill="#222933" stroke="#93b3c4" strokeWidth="1.400" />
          <text x={x} y={y + 7} textAnchor="middle" fill="#f1f3f5" fontSize="19" fontWeight="600" textLength="22" className="font-['Open_Sans']">{t}</text>
        </g>
      ))}
      <path d="M431.700 237v14l3-2.500 2 4.200 2-1-2-4h3.800z" fill="#f2f3f5" />
    </svg>
  );
}

/* ---------- document tabs ---------- */
const SheetIcon = ({ on }: { on?: boolean }) => (
  <S w={12} h={11}><path d="M0 0h7v9H0zM5 2h6v9H5z" fill={on ? '#e2e4e7' : '#858d9a'} stroke={on ? '#888f98' : '#6b7382'} strokeWidth=".7" /></S>
);
const SecIcon = () => <S w={10} h={11}><path d="M4.500 1.500l4 4-4 4-4-4z" stroke="#7e8695" strokeWidth="1.500" /><path d="M4.500 0v2M4.500 9v2" stroke="#7e8695" /></S>;
const HomeIcon = () => <S w={11} h={11}><path d="M0 6l5.500-5L11 6" stroke="#8b93a1" strokeWidth="1.500" /><path d="M2 5.500L5.500 2.500 9 5.500V11H6.500V7.500h-2V11H2z" fill="#8b93a1" stroke="none" /></S>;
const DOCS: [string, number, string][] = [['Site', 15, 's'], ['{3D}', 17, 'h'], ['as', 8, 'c'], ['Section 3', 37, 'c'], ['Section 5', 38, 'c'], ['L7', 9, 's'], ['L6', 10, 's']];
function DocTabs() {
  return (
    <div className="flex h-[17px] items-center bg-[#454e62] text-[9.500px] leading-[13px] text-[#d2d6dc]">
      {DOCS.map(([t, w, k]) => (
        <div key={t} className="flex w-[100px] items-center pl-[5px]">
          <div className="w-[17px]">{k === 's' ? <SheetIcon /> : k === 'h' ? <HomeIcon /> : <SecIcon />}</div><Fit t={t} w={w} />
        </div>
      ))}
      <div className="flex h-[17px] w-[99px] items-center bg-[#222934] pl-[3px] pr-[4px] text-[#eef0f2]">
        <div className="w-[18px]"><SheetIcon on /></div><Fit t="L11" w={15} c="font-bold" /><div className="ml-auto"><Close s={7} /></div>
      </div>
      <div className="ml-auto mr-[3px]"><S w={6} h={6}><path d="M0 .600h6" stroke="#8d95a3" /><path d="M.500 3h5L3 5.500z" fill="#a3aab6" stroke="none" /></S></div>
    </div>
  );
}
const T = '#53c3c4';
function ViewBar() {
  return (
    <div className="flex h-[14px] items-center bg-[#2f3743]">
      <div className="flex h-full w-[292px] shrink-0 items-center bg-[#2a323e] pl-[20px] text-[8px] text-[#d2d6dc]">
        <div className="w-[46px] leading-3"><Fit t="1 : 100" w={27} /></div>
        <div className="w-[20px]"><S w={13} h={10}><path d="M0 0h13v10H0z" fill="#cfd4dc" stroke="none" /></S></div>
        <div className="w-[21px]"><S w={12} h={12}><path d="M1 4h7v7H1zM1 4l3-3h7v7l-3 3M8 4l3-3" /></S></div>
        <div className="w-[19px]"><S w={13} h={12}><circle cx="5" cy="5" r="2.500" fill="#eebf6c" stroke="none" /><path d="M5 0v10M0 5h10M2 2l6 6M8 2L2 8" stroke="#eebf6c" strokeWidth=".9" /><circle cx="10" cy="8" r="2.500" fill={T} stroke="none" /></S></div>
        <div className="w-[20px]"><S w={13} h={12}><circle cx="4.500" cy="4.500" r="4.500" fill="#eef0f2" stroke="none" /><path d="M0 11h8" stroke="#0c0f14" strokeWidth="2" /><circle cx="10.500" cy="8" r="2.500" fill={T} stroke="none" /></S></div>
        <div className="w-[20px]"><S w={13} h={12}><path d="M0 8h6M3 5v6M5 8V3h6M9 1v6" stroke="#a5abb4" strokeWidth="1.500" /><path d="M8 7l4 4M12 7l-4 4" stroke="#d4506a" strokeWidth="1.800" /></S></div>
        <div className="w-[19px]"><S w={13} h={12}><path d="M0 8h6M3 5v6M5 8V3h6M9 1v6" stroke="#a5abb4" strokeWidth="1.500" /><circle cx="10" cy="8" r="2.500" fill={T} stroke="none" /></S></div>
        <div className="w-[22px]"><S w={11} h={7}><circle cx="2.500" cy="4" r="2" /><circle cx="7" cy="4" r="2" /><path d="M3 2l2-1.500M8 2l3-1.500" /></S></div>
        <div className="w-[18px]"><S w={7} h={11}><circle cx="3.500" cy="3.500" r="3.300" fill={T} stroke="none" /><path d="M2.200 7h2.600v4H2.200z" fill="#cfd4dc" stroke="none" /></S></div>
        <div className="w-[18px]"><S w={11} h={11}><path d="M0 0h7v7H0z" fill="#aab0b9" stroke="none" /><path d="M5 4h5v6H5z" stroke="#8b929d" /></S></div>
        <div className="w-[20px]"><S w={13} h={12}><path d="M1 4h7v7H1zM1 4l3-3h7v4" stroke="#a5abb4" /><path d="M2 10l6-6" stroke="#d4506a" /><circle cx="10" cy="8.500" r="2.500" fill={T} stroke="none" /></S></div>
        <div className="w-[21px]"><S w={13} h={12}><path d="M1 0v11M11 0v5M1 3h10M1 8h6" stroke="#a5abb4" /><circle cx="10" cy="8.500" r="2.500" fill={T} stroke="none" /></S></div>
        <S w={4} h={7}><path d="M3.500.500l-3 3 3 3" stroke="#8b929d" /></S>
      </div>
      <div className="ml-[329px] h-[3px] w-[13px] rounded bg-[#556070]" />
      <S w={5} h={8} c="ml-auto mr-[3px]"><path d="M1 1l3 3-3 3" stroke="#a3aab4" strokeWidth="1.400" /></S>
      <div className="flex h-full w-[14px] items-end justify-end p-[3px]"><S w={6} h={6}><path d="M4 0h2v2H4zM0 4h2v2H0zM4 4h2v2H4z" fill="#6d7683" stroke="none" /></S></div>
    </div>
  );
}
function Canvas() {
  return (
    <div className="flex w-[988px] shrink-0 flex-col border-r border-[#4c5665] bg-[#3b4451]">
      <div className="h-px" />
      <DocTabs />
      <div className="flex h-[562px] pl-[2px]">
        <div className="relative">
          <Drawing />
          <div className="absolute right-px top-[2px] flex h-[85px] w-[24px] flex-col items-center rounded-sm bg-[#5f6671] pt-[14px]">
            <S w={13} h={13}><circle cx="6.500" cy="6.500" r="5.800" fill="#848b95" stroke="#aab0b8" /><path d="M4 4.500h5v4.500H4zM4 4.500L6.500 3 9 4.500" stroke="#cfd3d8" /></S>
            <S w={11} h={11} c="mt-[20px]"><path d="M1 0h7v7H1z" fill="#85954d" stroke="none" /><path d="M2 1l4 4" stroke="#56632f" /><circle cx="8.500" cy="8" r="2" fill="#c6cbd0" stroke="none" /></S>
            <Caret c="mt-auto mb-[3px] ml-[15px] opacity-70" />
          </div>
        </div>
        <div className="flex w-[13px] flex-col items-center bg-[#2f3743] pt-[4px]">
          <Chev d="up" /><div className="mt-[266px] h-[13px] w-[3px] rounded bg-[#556070]" /><Chev c="mb-[3px] mt-auto" />
        </div>
      </div>
      <ViewBar />
    </div>
  );
}

/* ---------- project browser ---------- */
const PLANS: [string, number][] = [['L9', 10], ['L8', 10], ['L11', 15], ['L10', 15], ['L13', 15], ['L12', 15], ['L14', 15], ['L15', 15], ['L16', 15], ['L18', 15], ['L19', 15], ['L17', 15], ['L7', 9], ['L6', 10]];
const FLOORS: [string, number][] = [['L1 - Architectural', 70], ['L9', 10], ['L8', 10], ['L2 - Architectural', 70], ['L11', 14], ['L10', 15], ['L13', 15], ['L12', 15], ['L14', 15], ['L15', 15], ['L16', 15], ['L18', 15], ['L19', 15], ['L17', 15], ['L7', 9], ['L6', 10], ['L3', 10]];
function Leaf({ t, w, on }: { t: string; w: number; on?: boolean }) {
  return (
    <div className={`flex h-[15.590px] items-center pl-[31px] ${on ? 'bg-[#2f3745] font-bold text-white' : ''}`}>
      <div className="h-full w-px bg-[#434d5b]" />
      <div className="h-px w-[16px] bg-[#434d5b]" />
      <div className={`ml-[6px] mr-[3px] h-[13px] w-[13px] border-2 border-[#878d95] ${w > 50 ? 'bg-[#86c5f0]' : 'bg-[#dcdddc]'}`} />
      <Fit t={t} w={w} />
    </div>
  );
}
const Minus = () => <span className="mr-[6px] h-px w-[7px] bg-[#aab1ba]" />;
function Browser() {
  return (
    <div className="flex flex-1 flex-col border-l border-[#2d3541] bg-[#3b4452] text-[9.500px] leading-[13px] text-[#dbdfe3]">
      <div className="mt-[2px] flex h-[14px] items-center justify-between bg-[#222934] pl-[3px] pr-[2px] text-[9px]"><Fit t="Project Browser - enam (kolom fix)" w={142} /><Close s={7} /></div>
      <div className="ml-[9px] mt-[7px] flex h-[17px] w-[153px] items-center bg-[#2f3744] pl-[6px] text-[#8e96a1]">
        <S w={13} h={12}><circle cx="5" cy="5" r="4" stroke="#a8afb9" strokeWidth="1.400" /><path d="M8 8l4 4" stroke="#a8afb9" strokeWidth="1.500" /></S><Fit t="Search" w={27} c="ml-[7px]" />
      </div>
      <div className="mt-[6px] flex flex-1">
        <div className="ml-[3px] w-[151px] shrink-0 overflow-hidden pt-px">
          <div className="flex h-[15.590px] items-center pl-[3px]"><Minus /><S w={13} h={12} c="mr-[3px]"><path d="M3 .600H1v3M10 .600h2v3M3 11.400H1v-3M10 11.400h2v-3" /><circle cx="6.500" cy="6" r="3.800" fill="#e5e7ea" stroke="none" /></S><Fit t="Views (Discipline)" w={72} /></div>
          <div className="flex h-[15.590px] items-center pl-[15px]"><Minus /><Fit t="Architectural" w={53} /></div>
          <div className="flex h-[15.590px] items-center pl-[28px]"><Minus /><Fit t="Structural Plans" w={64} /></div>
          {PLANS.map(([t, w]) => <Leaf key={t} t={t} w={w} on={t === 'L11'} />)}
          <div className="flex h-[15.590px] items-center pl-[28px]"><Minus /><Fit t="Floor Plans (Architectural P" w={111} /></div>
          {FLOORS.map(([t, w]) => <Leaf key={t} t={t} w={w} />)}
        </div>
        <div className="flex flex-1 flex-col items-center bg-[#343c49] pt-[4px]"><Chev d="up" /><div className="mt-[8px] h-[228px] w-[4px] bg-[#4d5665]" /><Chev c="mb-[4px] mt-auto" /></div>
      </div>
    </div>
  );
}

/* ---------- status bar ---------- */
const Hand = ({ x }: { x: number }) => <path d={`M${x} 5v7l1.500-1 1 2 1.500-.500-1-2.500h2z`} fill="#eef0f2" stroke="none" />;
function StatusBar() {
  return (
    <div className="flex h-[19px] items-center border-b border-[#2b323d] bg-[#3b4451] pt-px text-[9px] leading-3 text-[#d2d6db]">
      <div className="w-[580px] shrink-0 pl-px"><Fit t="Click to select, TAB for alternates, CTRL adds, SHIFT unselects." w={250} /></div>
      <div className="w-[169px] shrink-0"><S w={13} h={12}><path d="M0 3l3-2 3 2v6l-3 2-3-2z" fill="#6fb7df" stroke="none" /><path d="M5 6l3-1 3 1v5l-3 1-3-1z" fill="#62c68e" stroke="none" /><circle cx="9" cy="3" r="2.500" fill="#d98a6a" stroke="none" /></S></div>
      <Chev c="opacity-30" />
      <S w={11} h={12} c="ml-[5px]"><path d="M5 0h4v5l2 2v5H0V9l5-3z" fill="#8a929d" stroke="none" /></S>
      <span className="w-[22px] text-[#7b838e]">:0</span>
      <S w={14} h={12}><path d="M0 0h14v12H0z" fill="#e1e4e8" stroke="none" /><path d="M2 4h10M2 7h10M2 10h10" stroke="#8b929c" strokeWidth=".9" /></S>
      <S w={12} h={12} c="ml-[5px]"><path d="M0 1h6v10H0zM4 3h8v9H4z" fill="#7f8792" stroke="#9fa6b0" strokeWidth=".7" /></S>
      <Fit t="Main Model" w={50} c="ml-[8px] text-[#767f8b]" />
      <Chev c="ml-[98px] opacity-30" />
      <div className="ml-auto flex items-center pr-[35px]">
        <div className="w-[18px]"><S w={12} h={13}><path d="M0 2h4v2H0zM6 2h4v2H6z" stroke="#c08c90" /><Hand x={7} /></S></div>
        <div className="w-[20px]"><S w={14} h={13}><path d="M0 4l4-3 4 3v4H2z" fill={BL} stroke="none" /><path d="M8 0l4 4M12 0L8 4" stroke="#e0485e" strokeWidth="1.800" /><Hand x={7} /></S></div>
        <div className="w-[18px]"><S w={12} h={13}><path d="M1 1h7M3 1v4h3V1M1 6h7M4.500 6v4" strokeWidth="1.500" /><Hand x={7} /></S></div>
        <div className="w-[19px]"><S w={13} h={13}><path d="M0 3l4-2h4v9H0z" fill={BL} stroke="none" /><path d="M8 0l4 4M12 0L8 4" stroke="#e0485e" strokeWidth="1.800" /><Hand x={7} /></S></div>
        <div className="w-[18px]"><S w={12} h={13}><path d="M4 1v10M0 6h9M2.500 2.500L4 1l1.500 1.500" strokeWidth="1.400" /><Hand x={7} /></S></div>
        <div className="w-[16px]"><S w={12} h={12}><circle cx="6" cy="6" r="4.800" stroke="#737c88" strokeDasharray="2 1.800" strokeWidth="1.700" /></S></div>
        <S w={13} h={12}><path d="M0 0h13L8.500 5.500V12l-4-2V5.500z" fill="#d3d7db" stroke="none" /></S><span className="ml-px">:0</span>
      </div>
    </div>
  );
}

/* ---------- university seal ---------- */
const FIVE = [0, 72, 144, 216, 288];
const SEAL = 'GADJAHMADA';
function Seal() {
  const k = '#303030';
  return (
    <svg width="290" height="300" viewBox="0 0 870 900" fill="none" stroke={k} strokeWidth="9" strokeLinejoin="round" className="block">
      {FIVE.map((a) => (
        <g key={a} transform={`rotate(${a} 428 457)`}>
          <path d="M428 764C408 780 401 788 400 796L428 850 457 796C456 788 448 780 428 764" fill="#fff" strokeWidth="8" />
          <path d="M323 304C300 262 272 238 257 200C252 165 252 120 302 104C350 92 405 104 428 62C451 104 506 92 554 104C604 120 604 165 599 200C584 238 556 262 533 304" fill="#fff" />
          <path d="M333 286C316 248 290 216 287 178C290 120 362 136 402 122C416 117 424 110 428 102C432 110 440 117 454 122C494 136 566 120 569 178C566 216 540 248 523 286" strokeWidth="8" />
        </g>
      ))}
      {FIVE.map((a) => (
        <g key={a} transform={`rotate(${a} 428 457)`} strokeWidth="5">
          {[0, 1, 2, 3, 4, 5, 6].map((i) => {
            const x = 18 + i * 13, y = 208 + i * 14;
            return <path key={i} d={`M${428 - x + 8} ${y + 6}L${428 - x} ${y}V310M${428 + x - 8} ${y + 6}L${428 + x} ${y}V310`} strokeWidth="5.500" />;
          })}
          <path d="M413 310C408 240 414 180 428 142C442 180 448 240 443 310" fill="#fff" strokeWidth="7" />
        </g>
      ))}
      <circle cx="428" cy="457" r="160" fill="#fff" strokeWidth="9" />
      <circle cx="428" cy="457" r="122" strokeWidth="8" />
      <circle cx="428" cy="457" r="72" strokeWidth="6" />
      <circle cx="428" cy="457" r="60" strokeWidth="5" />
      <circle cx="428" cy="457" r="50" strokeWidth="2" />
      <circle cx="428" cy="457" r="30" strokeWidth="25" />
      {SEAL.split('').map((ch, i) => (
        <g key={i} transform={`rotate(${198 + i * 36} 428 457)`}>
          <path d="M405 345L410 381H446L451 345" strokeWidth="4" />
          <text x="428" y="375" textAnchor="middle" fontSize="31" fontWeight="700" fill={k} stroke="none" className="font-['Liberation_Sans']">{ch}</text>
          <g transform="rotate(-18 428 457)"><path d="M428 337V385" strokeWidth="6" /></g>
        </g>
      ))}
      <path id="sealTop" d="M300 457A128 128 0 01556 457" stroke="none" />
      <path id="sealBottom" d="M276 457A152 152 0 00580 457" stroke="none" />
      <text fontSize="34" fontWeight="700" fill={k} stroke="none" textAnchor="middle" className="font-['Liberation_Sans']"><textPath href="#sealTop" startOffset="50%" textLength="300">UNIVERSITAS</textPath></text>
      <text fontSize="32" fontWeight="700" fill={k} stroke="none" textAnchor="middle" className="font-['Liberation_Sans']"><textPath href="#sealBottom" startOffset="50%" textLength="300">JOGJAKARTA</textPath></text>
    </svg>
  );
}

/* ---------- cover page ---------- */
const TEAM: [string, number, string][] = [
  ['Muhammad Nawal Firjatullah', 248, '(21/479129/TK/52811)'],
  ['Tri Kurniawan', 120, '(21/482456/TK/53286)'],
  ['Hani Nikmah Syafira', 176, '(21/474839/TK/52403)'],
  ['Muhammad Rafi Hakimi', 207, '(21/479315/TK/52862)'],
  ['Naufal Hilmi Yanuar', 172, '(21/480790/TK/53059)'],
];
const FOOT: [string, number][] = [
  ['PROGRAM STUDI SARJANA TEKNIK GEODESI', 539], ['DEPARTEMEN TEKNIK GEODESI FAKULTAS TEKNIK', 617],
  ['UNIVERSITAS GADJAH MADA', 349], ['YOGYAKARTA', 170], ['2024', 49],
];
function Cover() {
  return (
    <div className="flex w-[1306px] flex-col items-center font-['Liberation_Serif'] text-[#1c1c1c]">
      <div className="mt-[92px] flex flex-col items-center text-[26px] font-bold leading-[41px]">
        <Fit t="MODUL PEMODELAN 3 DIMENSI MENGGUNAKAN PERANGKAT" w={742} />
        <Fit t="LUNAK REVIT" w={167} />
      </div>
      <div className="ml-[5px] mt-[109px]"><Seal /></div>
      <div className="mt-[43px] text-[22px] font-bold leading-[29px]"><Fit t="Diusulkan oleh:" w={138} /></div>
      <div className="ml-[39px] mt-[3px] w-[530px] text-[21px] leading-[35.850px] text-[#3a3a3a]">
        {TEAM.map(([n, w, id], i) => (
          <div key={n} className="flex">
            <div className="w-[31px] shrink-0"><Fit t={`${i + 1}.`} w={15} /></div>
            <div className="w-[306px] shrink-0"><Fit t={n} w={w} /></div>
            <Fit t={id} w={193} />
          </div>
        ))}
      </div>
      <div className="mt-[138px] flex flex-col items-center text-[26px] font-bold leading-[41.100px]">
        {FOOT.map(([t, w]) => <Fit key={t} t={t} w={w} />)}
      </div>
    </div>
  );
}

export default function App() {
  return (
    <div className="min-h-[2000px] w-[1333px] overflow-hidden bg-white">
      <div className="ml-[2px] mt-px flex h-[746px] w-[1330px] flex-col overflow-hidden bg-[#3b444f] font-['Open_Sans',sans-serif]">
        <TitleBar />
        <RibbonTabs />
        <Ribbon />
        <div className="h-[20px] shrink-0 bg-[#3c4550]"><div className="ml-[3px] h-full w-[6px] bg-[#46504f]" /></div>
        <div className="flex h-[594px] shrink-0">
          <Properties />
          <Canvas />
          <Browser />
        </div>
        <StatusBar />
      </div>
      <Cover />
    </div>
  );
}
